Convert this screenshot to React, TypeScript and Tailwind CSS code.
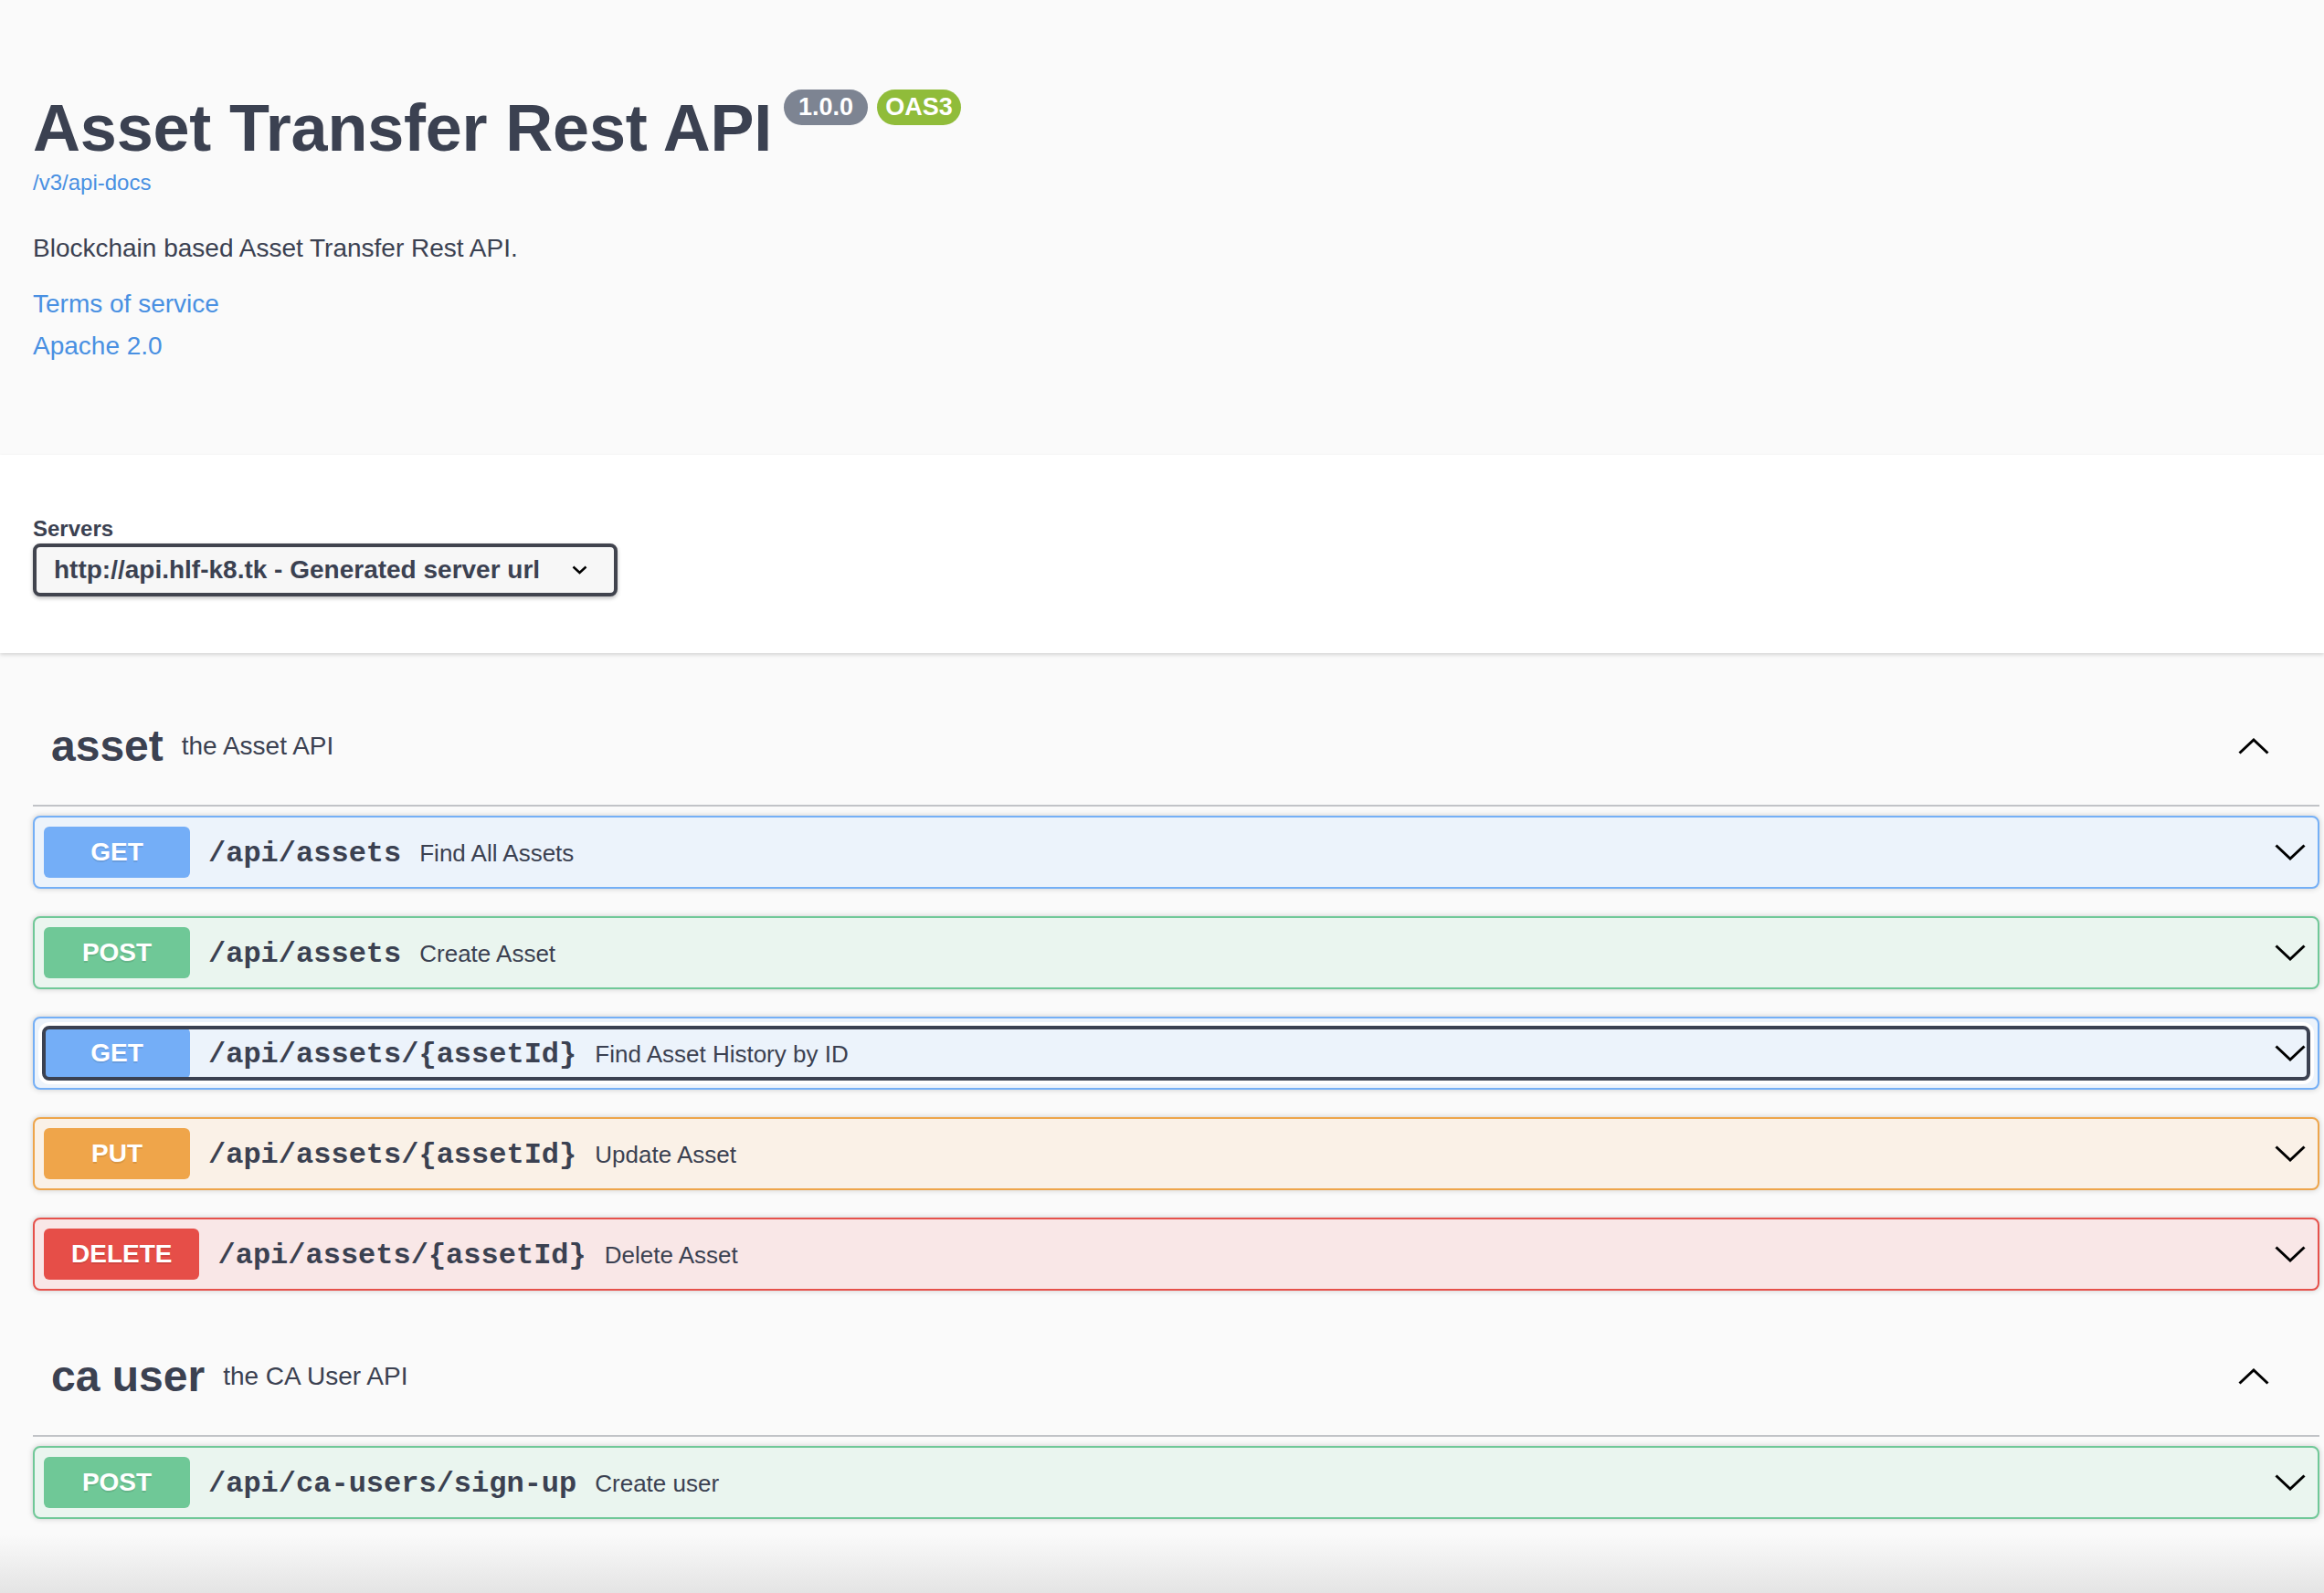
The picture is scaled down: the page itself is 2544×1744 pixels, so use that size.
import React from "react";

// ─── Method colours ─────────────────────────────────────

type Method = "GET" | "POST" | "PUT" | "DELETE";

const METHOD_STYLE: Record<Method, { row: string; badge: string }> = {
  GET: { row: "border-[#74aff6] bg-[#ecf3fb]", badge: "bg-[#74aef7]" },
  POST: { row: "border-[#70c898] bg-[#eaf5ef]", badge: "bg-[#6fc897]" },
  PUT: { row: "border-[#eea54b] bg-[#faf1e7]", badge: "bg-[#efa54a]" },
  DELETE: { row: "border-[#e6514b] bg-[#f9e7e7]", badge: "bg-[#e64e48]" },
};

interface Operation {
  method: Method;
  path: string;
  summary: string;
  focused?: boolean;
}

interface Tag {
  name: string;
  description: string;
  operations: Operation[];
}

const TAGS: Tag[] = [
  {
    name: "asset",
    description: "the Asset API",
    operations: [
      { method: "GET", path: "/api/assets", summary: "Find All Assets" },
      { method: "POST", path: "/api/assets", summary: "Create Asset" },
      { method: "GET", path: "/api/assets/{assetId}", summary: "Find Asset History by ID", focused: true },
      { method: "PUT", path: "/api/assets/{assetId}", summary: "Update Asset" },
      { method: "DELETE", path: "/api/assets/{assetId}", summary: "Delete Asset" },
    ],
  },
  {
    name: "ca user",
    description: "the CA User API",
    operations: [{ method: "POST", path: "/api/ca-users/sign-up", summary: "Create user" }],
  },
];

// ─── Icons ──────────────────────────────────────────────

function ArrowDown() {
  return (
    <svg width="34" height="18" viewBox="0 0 34 18" fill="none" stroke="#000" strokeWidth="3">
      <path d="M1.5 1.5 L17 16 L32.5 1.5" />
    </svg>
  );
}

function ArrowUp() {
  return (
    <svg width="34" height="18" viewBox="0 0 34 18" fill="none" stroke="#000" strokeWidth="3">
      <path d="M1.5 16.5 L17 2 L32.5 16.5" />
    </svg>
  );
}

// ─── Operation row ──────────────────────────────────────

function OperationRow({ op }: { op: Operation }) {
  const style = METHOD_STYLE[op.method];
  return (
    <div className={`mb-[30px] rounded-lg border-2 p-[10px] shadow-[0_0_6px_rgba(0,0,0,0.19)] ${style.row}`}>
      <div
        className={`flex items-center rounded-[6px] ${
          op.focused ? "outline-4 outline-[#3b4151] -outline-offset-2 shadow-[0_0_0_6px_#fff]" : ""
        }`}
      >
        <span
          className={`flex h-[56px] min-w-[160px] items-center justify-center rounded-[6px] px-[30px] text-[28px] font-bold text-white [text-shadow:0_2px_0_rgba(0,0,0,0.1)] ${style.badge}`}
        >
          {op.method}
        </span>
        <span className="ml-[20px] mt-[3px] font-['Liberation_Mono',monospace] text-[32px] font-bold text-[#3b4151]">
          {op.path}
        </span>
        <span className="ml-[20px] mt-[3px] flex-1 text-[26px] text-[#3b4151]">{op.summary}</span>
        <span className="mr-[3px] flex items-center">
          <ArrowDown />
        </span>
      </div>
    </div>
  );
}

// ─── Tag section ────────────────────────────────────────

function TagSection({ tag }: { tag: Tag }) {
  return (
    <div>
      <div className="flex h-[130px] items-center border-b-2 border-[#c1c3c7] pl-[20px] pr-[55px]">
        <div className="flex flex-1 items-center">
          <span className="text-[48px] font-bold leading-[58px] text-[#3b4151]">{tag.name}</span>
          <span className="ml-[20px] text-[28px] leading-[34px] text-[#3b4151]">{tag.description}</span>
        </div>
        <ArrowUp />
      </div>
      <div className="mt-[10px]">
        {tag.operations.map((op, i) => (
          <OperationRow key={i} op={op} />
        ))}
      </div>
    </div>
  );
}

// ─── Page ───────────────────────────────────────────────

export default function App() {
  return (
    <div className="relative min-h-[1744px] overflow-hidden bg-[#fafafa] font-['Liberation_Sans',Arial,sans-serif] text-[#3b4151]">
      {/* Info */}
      <div className="px-[36px] pt-[100px] pb-[101px]">
        <div className="flex items-start">
          <h2 className="text-[72px] font-bold leading-[80px] tracking-[-0.2px] text-[#3b4151]">
            Asset Transfer Rest API
          </h2>
          <span className="ml-[13px] mt-[-2px] flex h-[39px] items-center rounded-full bg-[#7d8492] px-[16px] text-[27px] font-bold text-white">
            1.0.0
          </span>
          <span className="ml-[10px] mt-[-2px] flex h-[39px] items-center rounded-full bg-[#90bc3a] px-[9px] text-[27px] font-bold text-white">
            OAS3
          </span>
        </div>
        <a className="mt-[5px] block text-[24px] leading-[30px] text-[#4990e2]">/v3/api-docs</a>
        <p className="mt-[39px] text-[28px] leading-[36px]">Blockchain based Asset Transfer Rest API.</p>
        <a className="mt-[25px] block text-[28px] leading-[36px] text-[#4990e2]">Terms of service</a>
        <a className="mt-[10px] block text-[28px] leading-[36px] text-[#4990e2]">Apache 2.0</a>
      </div>

      {/* Servers */}
      <div className="bg-white px-[36px] pt-[60px] pb-[62px] shadow-[0_2px_4px_rgba(0,0,0,0.15)]">
        <div className="mt-[7px] text-[24px] font-bold leading-[28px]">Servers</div>
        <div className="mt-[2px] inline-flex h-[58px] items-center rounded-lg border-4 border-[#41444e] bg-[#f7f7f7] pl-[19px] pr-[29px] shadow-[0_2px_4px_rgba(0,0,0,0.25)]">
          <span className="text-[28px] font-bold">http://api.hlf-k8.tk - Generated server url</span>
          <svg className="ml-[35px]" width="17" height="10" viewBox="0 0 17 10" fill="none" stroke="#000" strokeWidth="2.5">
            <path d="M1.5 1.5 L8.5 8 L15.5 1.5" />
          </svg>
        </div>
      </div>

      {/* Operations */}
      <div className="mt-[38px] pl-[36px] pr-[5px]">
        {TAGS.map((tag) => (
          <TagSection key={tag.name} tag={tag} />
        ))}
      </div>

      {/* bottom window shade */}
      <div className="pointer-events-none absolute inset-x-0 bottom-0 h-[64px] bg-gradient-to-b from-transparent to-[#e4e4e4]" />
    </div>
  );
}
